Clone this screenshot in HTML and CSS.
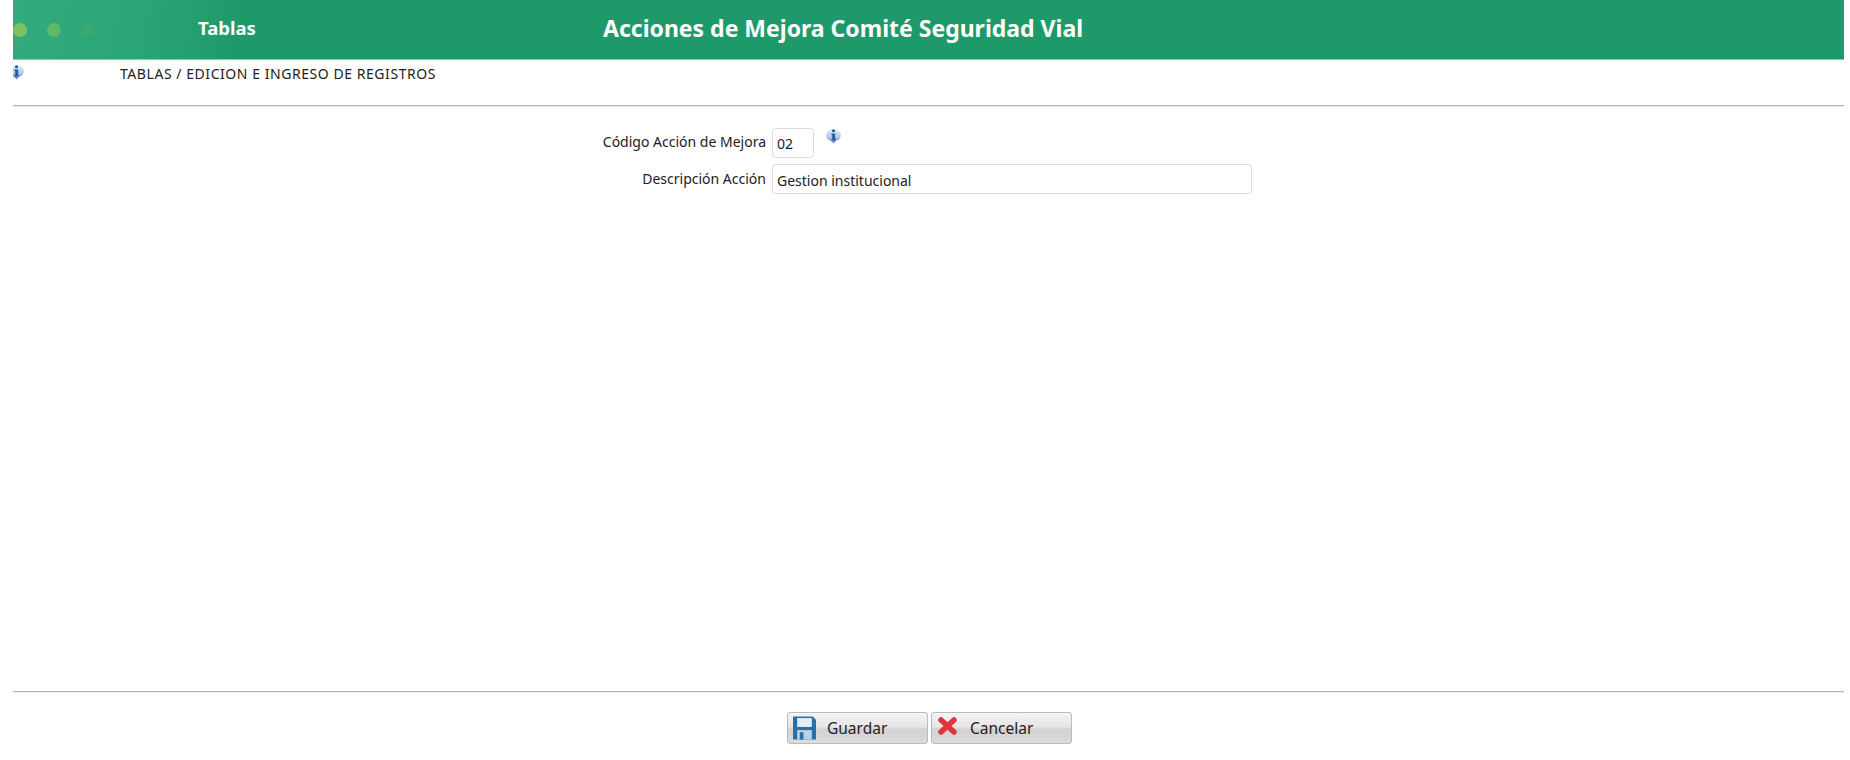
FILE: index.html
```html
<html>
<head>
    <title>Tablas</title>
    <link rel="stylesheet" href="styles.css">
</head>
<body>
    <svg width="0" height="0" class="defs">
        <defs>
            <linearGradient id="orb" x1="0" y1="0" x2="0" y2="1">
                <stop offset="0" stop-color="#e3ebf8"/>
                <stop offset="0.55" stop-color="#b4c8ea"/>
                <stop offset="1" stop-color="#4f78c0"/>
            </linearGradient>
        </defs>
        <symbol id="info" viewBox="0 0 16 16">
            <path d="M8 15.500 L5.600 13 C2.800 12.300 1 10.200 1 7.800 C1 4.500 4 2 8 2 C12 2 15 4.500 15 7.800 C15 10.200 13.200 12.300 10.400 13 Z" fill="url(#orb)"/>
            <circle cx="8" cy="3.500" r="1.500" fill="#2a56a6"/>
            <path d="M6 6.200 H9.500 V11.500 H10.300 V12.800 H6 V11.500 H6.800 V7.500 H6 Z" fill="#2a56a6"/>
        </symbol>
    </svg>

    <div class="header">
        <div class="dots">
            <span class="dot dot-1"></span>
            <span class="dot dot-2"></span>
            <span class="dot dot-3"></span>
        </div>
        <div class="section">Tablas</div>
        <div class="title">Acciones de Mejora Comité Seguridad Vial</div>
    </div>

    <div class="crumb">
        <span class="crumb-icon"><svg class="icon"><use href="#info"/></svg></span>
        <span class="crumb-text">TABLAS / EDICION E INGRESO DE REGISTROS</span>
    </div>
    <div class="rule"></div>

    <div class="form">
        <div class="row">
            <label class="label">Código Acción de Mejora</label>
            <input class="input input-code" type="text" value="02">
            <svg class="icon icon-help"><use href="#info"/></svg>
        </div>
        <div class="row">
            <label class="label">Descripción Acción</label>
            <input class="input input-desc" type="text" value="Gestion institucional">
        </div>
    </div>

    <div class="rule"></div>

    <div class="actions">
        <div class="button">
            <svg class="button-icon" viewBox="1 1 22 22">
                <path d="M1 1 H20 L23 4 V23 H1 Z" fill="#2a6fa8"/>
                <rect x="5" y="2.500" width="14" height="8.500" fill="#e4edf4"/>
                <rect x="5" y="14" width="14" height="9" fill="#b9d2e6"/>
                <rect x="7.500" y="16" width="3.500" height="7" fill="#2a6fa8"/>
            </svg>
            <span>Guardar</span>
        </div>
        <div class="button">
            <svg class="button-icon button-icon-x" viewBox="0 0 19 18">
                <path d="M3 3 L16 15 M16 3 L3 15" stroke="#e0343a" stroke-width="5.500" stroke-linecap="round" fill="none"/>
            </svg>
            <span>Cancelar</span>
        </div>
    </div>
</body>
</html>
```

FILE: styles.css
```css
body {
    margin: 0;
    padding: 0 6px 0 13px;
    font-family: "Noto Sans", "Open Sans", sans-serif;
    font-size: 14px;
    color: #222;
    background-color: white;
}
.defs {
    display: block;
    height: 0;
}
.header {
    height: 59px;
    background: linear-gradient(100deg, #34ab7c 0, #2aa576 130px, #1e9a6a 230px);
    border-bottom: 1px solid #7fd0ac;
    display: flex;
    align-items: center;
    color: white;
    font-weight: bold;
}
.dots {
    width: 185px;
    display: flex;
    gap: 20px;
}
.dot {
    width: 14px;
    height: 14px;
    border-radius: 50%;
}
.dot-1 {
    background-color: #7cc25e;
}
.dot-2 {
    background-color: #5cb96a;
}
.dot-3 {
    background-color: #38a970;
}
.section {
    width: 405px;
    font-size: 18.500px;
    margin-bottom: 4px;
}
.title {
    font-size: 23px;
    margin-bottom: 4px;
}
.crumb {
    height: 45px;
    display: flex;
    align-items: flex-start;
}
.crumb-icon {
    width: 12px;
    height: 17px;
    margin-top: 3px;
    overflow: hidden;
    flex-shrink: 0;
}
.crumb-icon .icon {
    margin-left: -5px;
}
.crumb-text {
    margin-left: 95px;
    margin-top: 4px;
    font-size: 14px;
    letter-spacing: 0.55px;
}
.icon {
    width: 17px;
    height: 17px;
    display: block;
}
.rule {
    height: 1px;
    background-color: #b4b4b4;
    border-bottom: 1px solid #eee;
}
.form {
    height: 584px;
    padding-top: 20px;
    box-sizing: border-box;
}
.row {
    display: flex;
    align-items: center;
    margin-bottom: 6px;
}
.label {
    width: 753px;
    text-align: right;
    margin-right: 6px;
    padding-bottom: 2px;
}
.input {
    height: 30px;
    box-sizing: border-box;
    border: 1px solid #ddd;
    border-radius: 4px;
    padding: 2px 4px 0;
    font-family: inherit;
    font-size: 14px;
    color: #222;
    background-color: white;
}
.input-code {
    width: 42px;
}
.input-desc {
    width: 480px;
}
.icon-help {
    margin-left: 11px;
    margin-bottom: 14px;
}
.actions {
    display: flex;
    gap: 3px;
    margin-top: 19px;
    padding-left: 774px;
}
.button {
    width: 141px;
    height: 32px;
    box-sizing: border-box;
    border: 1px solid #bbb;
    border-radius: 3px;
    background: linear-gradient(#f4f4f4, #e6e6e6 45%, #d2d2d2 55%, #dcdcdc);
    display: flex;
    align-items: center;
    padding-left: 5px;
    font-size: 15.500px;
}
.button-icon {
    width: 23px;
    height: 24px;
    margin-right: 11px;
    flex-shrink: 0;
}
.button-icon-x {
    width: 19px;
    height: 18px;
    margin-left: 1px;
    margin-right: 13px;
    margin-top: -5px;
}
```
